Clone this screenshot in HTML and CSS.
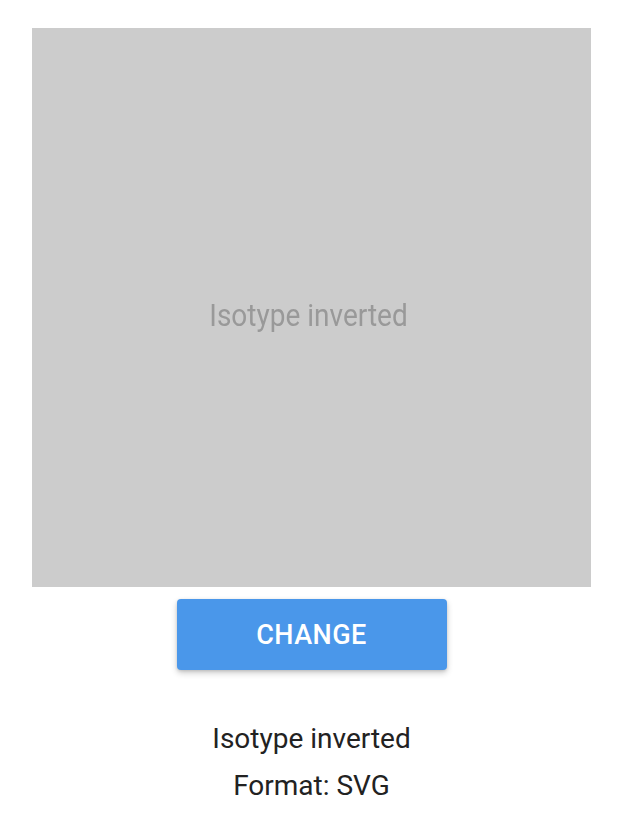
FILE: index.html
```html
<!DOCTYPE html>
<html lang="en">
<head>
  <meta charset="UTF-8" />
  <meta name="viewport" content="width=device-width, initial-scale=1.0" />
  <title>Isotype inverted</title>
  <link rel="stylesheet" href="styles.css">
</head>
<body>
  <div class="container">
    <!-- Logo preview placeholder -->
    <div class="preview">
      <span class="preview-label">Isotype inverted</span>
    </div>

    <button class="change-btn">CHANGE</button>

    <!-- Logo info -->
    <div class="info">
      <p>Isotype inverted</p>
      <p>Format: SVG</p>
    </div>
  </div>
</body>
</html>
```

FILE: styles.css
```css
body {
  margin: 0;
  font-family: Roboto, "Noto Sans", Arial, sans-serif;
  background: #fff;
  color: #222;
}
.container {
  width: 559px;
  padding: 28px 0 0 32px;
  display: flex;
  flex-direction: column;
  align-items: center;
}
.preview {
  width: 559px;
  height: 559px;
  background: #cccccc;
  display: flex;
  justify-content: center;
  align-items: center;
}
.preview-label {
  margin-top: 16px;
  margin-right: 6px;
  font-size: 28px;
  color: #999;
  transform: scaleY(1.12);
  filter: blur(0.4px);
}
.change-btn {
  margin-top: 12px;
  width: 270px;
  height: 71px;
  background: #4a97ea;
  color: #fff;
  border: none;
  border-radius: 4px;
  font-family: Roboto, Arial, sans-serif;
  font-size: 27px;
  font-weight: 500;
  letter-spacing: 0.5px;
  box-shadow: 0 3px 6px rgba(0, 0, 0, 0.2), 0 1px 3px rgba(0, 0, 0, 0.12);
  cursor: pointer;
}
.info {
  margin-top: 45px;
  text-align: center;
}
.info p {
  margin: 0;
  font-size: 28px;
  line-height: 47px;
}
```
